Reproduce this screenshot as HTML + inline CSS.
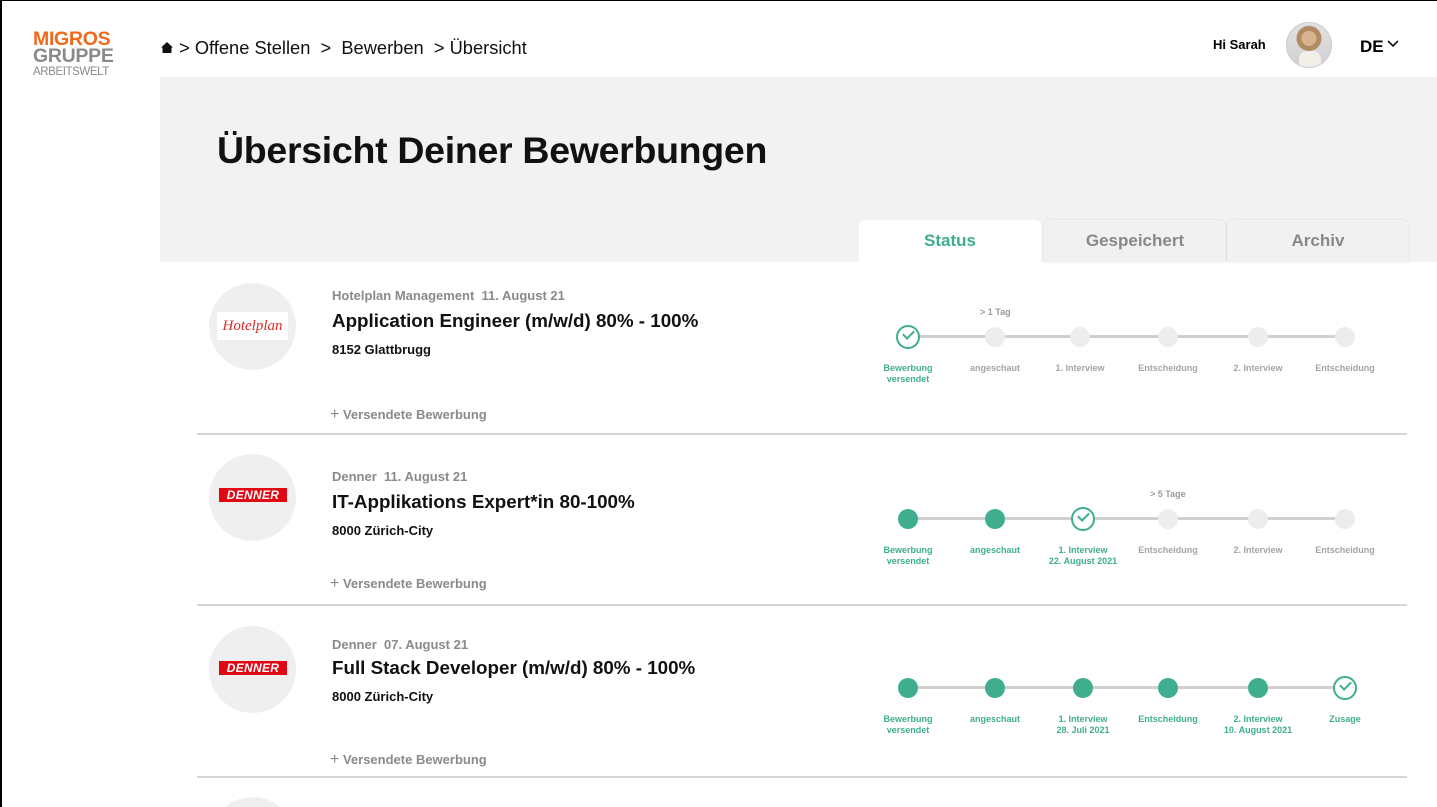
<!DOCTYPE html>
<html style="overflow:hidden;width:1437px;height:807px"><head><meta charset="utf-8"><style>
*{margin:0;padding:0;box-sizing:border-box}
body{width:1437px;height:807px;overflow:hidden;background:#fff;font-family:"Liberation Sans",Arial,sans-serif;position:relative}
.a{position:absolute}
.logo{left:33px;top:31px;line-height:17px;font-weight:bold;font-size:19.5px;letter-spacing:-0.3px}
.crumb{left:160px;top:37px;font-size:18.3px;color:#111}
.band{left:160px;top:77px;width:1277px;height:185px;background:#f2f2f2}
h1{position:absolute;left:217px;top:129px;font-size:37.5px;font-weight:bold;color:#111;letter-spacing:-0.3px}
.tab{top:220px;height:42px;width:182px;background:#f1f1f1;border-radius:6px 6px 0 0;text-align:center;font-weight:bold;font-size:17px;color:#888;line-height:42px;box-shadow:0 0 2px rgba(0,0,0,.12)}
.circ{width:87px;height:87px;border-radius:50%;background:#efefef;left:209px}
.comp{left:332px;font-size:13px;font-weight:bold;color:#8a8a8a}
.title{left:332px;font-size:18.8px;font-weight:bold;color:#111}
.loc{left:332px;font-size:13px;font-weight:bold;color:#111}
.more{left:330px;font-size:13px;font-weight:bold;color:#8a8a8a}
.sep{left:197px;width:1210px;height:2px;background:#d6d6d6}
.line{left:908px;width:437px;height:3px;background:#d0d0d0}
.st{width:100px;text-align:center;font-size:9px;font-weight:bold;color:#a4a4a4;line-height:11px}
.st.g{color:#3fae8f}
.dot{width:20px;height:20px;border-radius:50%;background:#ededed;margin:0 auto 16px}
.g .dot{background:#3fae8f}
.chk{width:24px;height:24px;border-radius:50%;border:2.5px solid #3fae8f;background:#fff;margin:-2px auto 14px;position:relative}
.chk:after{content:"";position:absolute;left:5px;top:3px;width:9px;height:5px;border-left:2.5px solid #3fae8f;border-bottom:2.5px solid #3fae8f;transform:rotate(-45deg)}
.note{font-size:9px;color:#999;font-weight:bold}
.den{width:68px;height:14px;background:#e30613;color:#fff;font-weight:bold;font-style:italic;font-size:12px;line-height:14px;text-align:center;letter-spacing:.3px}
</style></head><body>
<div class="a" style="left:0;top:0;width:2px;height:807px;background:#000"></div>
<div class="a" style="left:0;top:0;width:1437px;height:1px;background:#000"></div>
<div class="a logo"><span style="color:#f06a1c">MIGROS</span><br><span style="color:#8a8a8a">GRUPPE</span><br><span style="font-size:11.5px;font-weight:normal;color:#8a8a8a;letter-spacing:-0.4px;position:relative;top:-4px">ARBEITSWELT</span></div>
<div class="a crumb"><svg width="14" height="13" viewBox="0 0 14 13" style="vertical-align:0"><path d="M7 1 L13 6.5 L11.5 6.5 L11.5 12 L2.5 12 L2.5 6.5 L1 6.5 Z" fill="#111"/></svg> &gt; Offene Stellen &nbsp;&gt;&nbsp; Bewerben &nbsp;&gt; Übersicht</div>
<div class="a" style="left:1213px;top:37px;font-size:13px;font-weight:bold">Hi Sarah</div>
<div class="a" style="left:1286px;top:22px;width:46px;height:46px;border-radius:50%;border:1px solid #ccc;background:radial-gradient(circle at 50% 35%,#d9b28f 0 7px,#b08a60 8px 12px,transparent 13px),linear-gradient(#e2e2e2,#d0d0d0);overflow:hidden"><div style="position:absolute;left:12px;top:28px;width:22px;height:20px;background:#f2efe9;border-radius:8px 8px 0 0"></div></div>
<div class="a" style="left:1360px;top:37px;font-size:17px;font-weight:bold">DE<svg width="12" height="8" viewBox="0 0 12 8" style="margin-left:3px;vertical-align:4px"><path d="M1 1 L6 6 L11 1" stroke="#111" stroke-width="1.6" fill="none"/></svg></div>
<div class="a band"></div>
<h1>Übersicht Deiner Bewerbungen</h1>
<div class="a tab" style="left:859px;background:#fff;color:#3fae8f;box-shadow:none;height:43px">Status</div>
<div class="a tab" style="left:1044px">Gespeichert</div>
<div class="a tab" style="left:1227px">Archiv</div>

<!-- row1 -->
<div class="a circ" style="top:283px"><div class="a" style="left:8px;top:29px;width:71px;height:28px;background:#fff;color:#e12a2a;font-style:italic;font-family:'Liberation Serif',serif;font-size:15px;text-align:center;line-height:28px">Hotelplan</div></div>
<div class="a comp" style="top:288px">Hotelplan Management&nbsp; 11. August 21</div>
<div class="a title" style="top:310px">Application Engineer (m/w/d) 80% - 100%</div>
<div class="a loc" style="top:342px">8152 Glattbrugg</div>
<div class="a more" style="top:406px"><span style="font-weight:normal;font-size:16px">+</span> Versendete Bewerbung</div>
<div class="a sep" style="top:433px"></div>
<div class="a line" style="top:335px"></div>
<div class="a note" style="left:980px;top:307px">&gt; 1 Tag</div>
<div class="a st g" style="left:858px;top:327px"><div class="chk"></div>Bewerbung<br>versendet</div>
<div class="a st" style="left:945px;top:327px"><div class="dot"></div>angeschaut</div>
<div class="a st" style="left:1030px;top:327px"><div class="dot"></div>1. Interview</div>
<div class="a st" style="left:1118px;top:327px"><div class="dot"></div>Entscheidung</div>
<div class="a st" style="left:1208px;top:327px"><div class="dot"></div>2. Interview</div>
<div class="a st" style="left:1295px;top:327px"><div class="dot"></div>Entscheidung</div>

<!-- row2 -->
<div class="a circ" style="top:454px"><div class="a den" style="left:10px;top:34px">DENNER</div></div>
<div class="a comp" style="top:469px">Denner&nbsp; 11. August 21</div>
<div class="a title" style="top:491px">IT-Applikations Expert*in 80-100%</div>
<div class="a loc" style="top:523px">8000 Zürich-City</div>
<div class="a more" style="top:575px"><span style="font-weight:normal;font-size:16px">+</span> Versendete Bewerbung</div>
<div class="a sep" style="top:604px"></div>
<div class="a line" style="top:517px"></div>
<div class="a note" style="left:1150px;top:489px">&gt; 5 Tage</div>
<div class="a st g" style="left:858px;top:509px"><div class="dot"></div>Bewerbung<br>versendet</div>
<div class="a st g" style="left:945px;top:509px"><div class="dot"></div>angeschaut</div>
<div class="a st g" style="left:1033px;top:509px"><div class="chk"></div>1. Interview<br>22. August 2021</div>
<div class="a st" style="left:1118px;top:509px"><div class="dot"></div>Entscheidung</div>
<div class="a st" style="left:1208px;top:509px"><div class="dot"></div>2. Interview</div>
<div class="a st" style="left:1295px;top:509px"><div class="dot"></div>Entscheidung</div>

<!-- row3 -->
<div class="a circ" style="top:626px"><div class="a den" style="left:10px;top:35px">DENNER</div></div>
<div class="a comp" style="top:637px">Denner&nbsp; 07. August 21</div>
<div class="a title" style="top:657px">Full Stack Developer (m/w/d) 80% - 100%</div>
<div class="a loc" style="top:689px">8000 Zürich-City</div>
<div class="a more" style="top:751px"><span style="font-weight:normal;font-size:16px">+</span> Versendete Bewerbung</div>
<div class="a sep" style="top:776px"></div>
<div class="a line" style="top:686px"></div>
<div class="a st g" style="left:858px;top:678px"><div class="dot"></div>Bewerbung<br>versendet</div>
<div class="a st g" style="left:945px;top:678px"><div class="dot"></div>angeschaut</div>
<div class="a st g" style="left:1033px;top:678px"><div class="dot"></div>1. Interview<br>28. Juli 2021</div>
<div class="a st g" style="left:1118px;top:678px"><div class="dot"></div>Entscheidung</div>
<div class="a st g" style="left:1208px;top:678px"><div class="dot"></div>2. Interview<br>10. August 2021</div>
<div class="a st g" style="left:1295px;top:678px"><div class="chk"></div>Zusage</div>

<div class="a" style="left:209px;top:797px;width:87px;height:10px;overflow:hidden"><div style="width:87px;height:87px;border-radius:50%;background:#efefef"></div></div>
</body></html>
